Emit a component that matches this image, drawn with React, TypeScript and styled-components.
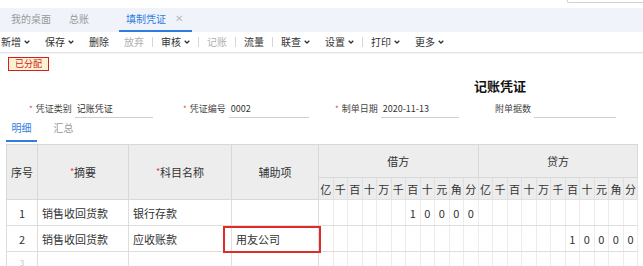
import React from 'react';
import styled, { createGlobalStyle } from 'styled-components';

const GlobalStyle = createGlobalStyle`
  html, body {
    margin: 0;
    padding: 0;
    background: #ffffff;
    font-family: 'Noto Sans CJK SC', 'Liberation Sans', sans-serif;
    color: #333;
  }
  * { box-sizing: border-box; }
`;

const Page = styled.div`
  width: 643px;
  height: 266px;
  overflow: hidden;
  position: relative;
`;

const TopStrip = styled.div`
  height: 8px;
  display: flex;
  justify-content: flex-end;
`;

const SearchStub = styled.div`
  width: 76px;
  height: 3px;
  border-left: 1px solid #cfd3d8;
  border-bottom: 1px solid #cfd3d8;
  border-bottom-left-radius: 2px;
`;

const TabBar = styled.div`
  height: 24px;
  background: #f0f4fa;
  display: flex;
  align-items: stretch;
  padding-left: 11px;
`;

const Tab = styled.div<{ $active?: boolean }>`
  position: relative;
  display: flex;
  align-items: center;
  font-size: 10px;
  line-height: 12px;
  color: ${(p) => (p.$active ? '#2f7de1' : '#9a9a9a')};
  padding: ${(p) => (p.$active ? '0 9px 0 7px' : '0')};
  margin-right: ${(p) => (p.$active ? '0' : '18px')};
  margin-left: ${(p) => (p.$active ? '12px' : '0')};
  border-bottom: 2px solid ${(p) => (p.$active ? '#2f7de1' : 'transparent')};
`;

const Close = styled.span`
  margin-left: 9px;
  color: #b5bcc6;
  font-size: 10px;
  font-family: 'DejaVu Sans', sans-serif;
`;

const Toolbar = styled.div`
  height: 21px;
  display: flex;
  align-items: center;
  gap: 15px;
  padding-left: 1px;
  border-bottom: 1px solid #e3e3e3;
  box-shadow: 0 1px 1px rgba(0, 0, 0, 0.04);
`;

const ToolItem = styled.div<{ $disabled?: boolean }>`
  display: flex;
  align-items: center;
  font-size: 10px;
  line-height: 12px;
  color: ${(p) => (p.$disabled ? '#b0b0b0' : '#333')};
`;

const Sep = styled.div`
  width: 1px;
  height: 10px;
  background: #d6d6d6;
  margin: 0 -7px;
`;

const Chevron = () => (
  <svg width="6" height="4" viewBox="0 0 6 4" style={{ marginLeft: 3 }}>
    <polyline points="0.7,0.7 3,3 5.3,0.7" fill="none" stroke="#333" strokeWidth="1.3" />
  </svg>
);

const Badge = styled.div`
  margin: 4px 0 0 8px;
  width: 41px;
  height: 14px;
  border: 1.5px solid #d0201f;
  background: #fdf1cf;
  color: #d0201f;
  font-size: 9px;
  line-height: 11px;
  text-align: center;
`;

const Title = styled.div`
  margin-top: 7px;
  padding-left: 474px;
  font-size: 13px;
  line-height: 16px;
  font-weight: bold;
  color: #111;
`;

const FormRow = styled.div`
  margin-top: 5px;
  display: flex;
  padding-left: 29px;
  height: 19px;
`;

const Field = styled.div<{ $w: number }>`
  width: ${(p) => p.$w}px;
  display: flex;
  align-items: center;
`;

const Star = styled.span`
  color: #e0403c;
  font-size: 8px;
  margin-right: 3px;
`;

const Label = styled.span`
  font-size: 9px;
  line-height: 12px;
  color: #444;
  margin-right: 3px;
`;

const Input = styled.div<{ $w: number }>`
  width: ${(p) => p.$w}px;
  height: 18px;
  border-bottom: 1px solid #cfcfcf;
  font-size: 9px;
  line-height: 18px;
  padding-left: 2px;
  color: #333;
`;

const SubTabs = styled.div`
  display: flex;
  height: 24px;
  padding-left: 6px;
`;

const SubTab = styled.div<{ $active?: boolean }>`
  width: 31px;
  text-align: center;
  font-size: 10px;
  line-height: 20px;
  color: ${(p) => (p.$active ? '#2f7de1' : '#999')};
  border-bottom: 2px solid ${(p) => (p.$active ? '#2f7de1' : 'transparent')};
  margin-right: 11px;
`;

const Table = styled.table`
  margin: 2px 0 0 6px;
  border-collapse: collapse;
  table-layout: fixed;
  width: 631px;
  font-size: 11px;
  color: #333;
`;

const Th = styled.th<{ $h?: number }>`
  background: #ededed;
  border: 1px solid #d8d8d8;
  font-weight: normal;
  height: ${(p) => p.$h ?? 22}px;
  padding: 0;
  line-height: 14px;
  text-align: center;
`;

const DigitTh = styled(Th)`
  font-size: 11px;
  border-color: #e0e0e0;
`;

const Req = styled.span`
  color: #e0403c;
  font-size: 9px;
  vertical-align: 2px;
`;

const Td = styled.td<{ $align?: string; $muted?: boolean }>`
  position: relative;
  height: 26px;
  border: 1px solid #dedede;
  padding: ${(p) => (p.$muted ? '5px 4px 0' : '0 4px')};
  vertical-align: ${(p) => (p.$muted ? 'top' : 'middle')};
  line-height: 12px;
  text-align: ${(p) => p.$align ?? 'left'};
  color: ${(p) => (p.$muted ? '#c4c4c4' : '#333')};
  font-size: ${(p) => (p.$muted ? '8px' : '11px')};
  white-space: nowrap;
`;

const DigitTd = styled.td<{ $edge?: boolean }>`
  height: 26px;
  padding: 0;
  text-align: center;
  border-top: 1px solid #dedede;
  border-bottom: 1px solid #dedede;
  border-left: 1px solid ${(p) => (p.$edge ? '#d0d0d0' : '#ececec')};
  border-right: 1px solid #ececec;
`;

const Highlight = styled.div`
  position: absolute;
  left: -9px;
  top: 0;
  width: 98px;
  height: 27px;
  border: 2px solid #e02b2b;
`;

const UNITS = ['亿', '千', '百', '十', '万', '千', '百', '十', '元', '角', '分'];

function digitCells(value: string | null, key: string) {
  const cells: string[] = Array(11).fill('');
  if (value) {
    const chars = value.split('');
    chars.forEach((c, i) => {
      cells[11 - chars.length + i] = c;
    });
  }
  return cells.map((c, i) => (
    <DigitTd key={key + i} $edge={i === 0}>
      {c}
    </DigitTd>
  ));
}

const rows = [
  { no: '1', summary: '销售收回货款', account: '银行存款', aux: '', debit: '10000', credit: null },
  { no: '2', summary: '销售收回货款', account: '应收账款', aux: '用友公司', debit: null, credit: '10000' },
  { no: '3', summary: '', account: '', aux: '', debit: null, credit: null },
];

export default function App() {
  return (
    <Page>
      <GlobalStyle />
      <TopStrip>
        <SearchStub />
      </TopStrip>
      <TabBar>
        <Tab>我的桌面</Tab>
        <Tab>总账</Tab>
        <Tab $active>
          填制凭证<Close>✕</Close>
        </Tab>
      </TabBar>
      <Toolbar>
        <ToolItem>新增<Chevron /></ToolItem>
        <ToolItem>保存<Chevron /></ToolItem>
        <ToolItem>删除</ToolItem>
        <ToolItem $disabled>放弃</ToolItem>
        <Sep />
        <ToolItem>审核<Chevron /></ToolItem>
        <Sep />
        <ToolItem $disabled>记账</ToolItem>
        <Sep />
        <ToolItem>流量</ToolItem>
        <Sep />
        <ToolItem>联查<Chevron /></ToolItem>
        <ToolItem>设置<Chevron /></ToolItem>
        <Sep />
        <ToolItem>打印<Chevron /></ToolItem>
        <ToolItem>更多<Chevron /></ToolItem>
      </Toolbar>
      <Badge>已分配</Badge>
      <Title>记账凭证</Title>
      <FormRow>
        <Field $w={154}>
          <Star>*</Star>
          <Label>凭证类别</Label>
          <Input $w={78}>记账凭证</Input>
        </Field>
        <Field $w={152}>
          <Star>*</Star>
          <Label>凭证编号</Label>
          <Input $w={80}>0002</Input>
        </Field>
        <Field $w={160}>
          <Star>*</Star>
          <Label>制单日期</Label>
          <Input $w={78}>2020-11-13</Input>
        </Field>
        <Field $w={130}>
          <Label>附单据数</Label>
          <Input $w={82} />
        </Field>
      </FormRow>
      <SubTabs>
        <SubTab $active>明细</SubTab>
        <SubTab>汇总</SubTab>
      </SubTabs>
      <Table>
        <colgroup>
          <col style={{ width: 31 }} />
          <col style={{ width: 91 }} />
          <col style={{ width: 103 }} />
          <col style={{ width: 87 }} />
          {UNITS.concat(UNITS).map((_, i) => (
            <col key={i} style={{ width: 14.5 }} />
          ))}
        </colgroup>
        <thead>
          <tr>
            <Th rowSpan={2}>序号</Th>
            <Th rowSpan={2}>
              <Req>*</Req>摘要
            </Th>
            <Th rowSpan={2}>
              <Req>*</Req>科目名称
            </Th>
            <Th rowSpan={2}>辅助项</Th>
            <Th colSpan={11} $h={33}>借方</Th>
            <Th colSpan={11} $h={33}>贷方</Th>
          </tr>
          <tr>
            {UNITS.concat(UNITS).map((u, i) => (
              <DigitTh key={i} $h={22}>
                {u}
              </DigitTh>
            ))}
          </tr>
        </thead>
        <tbody>
          {rows.map((r) => (
            <tr key={r.no}>
              <Td $align="center" $muted={r.no === '3'}>{r.no}</Td>
              <Td>{r.summary}</Td>
              <Td>{r.account}</Td>
              <Td>
                {r.aux}
                {r.aux && <Highlight />}
              </Td>
              {digitCells(r.debit, 'd')}
              {digitCells(r.credit, 'c')}
            </tr>
          ))}
        </tbody>
      </Table>
    </Page>
  );
}
